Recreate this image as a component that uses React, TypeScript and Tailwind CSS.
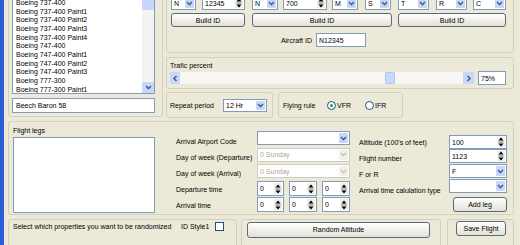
const aircraft = [
  "Boeing 737-400",
  "Boeing 737-400 Paint1",
  "Boeing 737-400 Paint2",
  "Boeing 737-400 Paint3",
  "Boeing 737-400 Paint4",
  "Boeing 747-400",
  "Boeing 747-400 Paint1",
  "Boeing 747-400 Paint2",
  "Boeing 747-400 Paint3",
  "Boeing 777-300",
  "Boeing 777-300 Paint1",
];

function Chevron({ dir = "down", color = "#4d6185" }: { dir?: string; color?: string }) {
  const pts =
    dir === "down" ? "1,2 3.5,4.5 6,2" : dir === "left" ? "4.5,1 2,3.5 4.5,6" : "2.5,1 5,3.5 2.5,6";
  return (
    <svg width="7" height="7" viewBox="0 0 7 7">
      <polyline points={pts} fill="none" stroke={color} strokeWidth="1.6" />
    </svg>
  );
}

function Combo({ className, text, disabled }: { className: string; text?: string; disabled?: boolean }) {
  return (
    <div
      className={`flex bg-white border ${disabled ? "border-[#cfccbd] text-[#aca899]" : "border-[#7f9db9]"} ${className}`}
    >
      <div className="flex-1 flex items-center pl-[2px] whitespace-nowrap overflow-hidden">{text}</div>
      <div
        className={`w-[9px] m-[1px] rounded-[1px] flex items-center justify-center ${disabled ? "bg-[#f1f0ea]" : "bg-[#c6d7fb]"}`}
      >
        <Chevron color={disabled ? "#c9c7ba" : "#4d6185"} />
      </div>
    </div>
  );
}

function Spin({ className, text }: { className: string; text: string }) {
  return (
    <div className={`flex bg-white border border-[#7f9db9] ${className}`}>
      <div className="flex-1 flex items-center pl-[2px] whitespace-nowrap overflow-hidden">{text}</div>
      <div className="w-[8px] m-[1px] bg-[#efeee8] flex items-center justify-center">
        <svg width="6" height="10" viewBox="0 0 6 10">
          <polygon points="3,0.5 5.5,3.5 0.5,3.5" fill="#000" />
          <line x1="0.5" y1="5" x2="5.5" y2="5" stroke="#555" strokeWidth="0.8" />
          <polygon points="0.5,6.5 5.5,6.5 3,9.5" fill="#000" />
        </svg>
      </div>
    </div>
  );
}

function Btn({ className, children }: { className: string; children: React.ReactNode }) {
  return (
    <div
      className={`flex items-center justify-center rounded-[3px] border border-[#5b6a7b] bg-linear-to-b from-white to-[#e3e1d5] ${className}`}
    >
      {children}
    </div>
  );
}

function Radio({ checked }: { checked?: boolean }) {
  return (
    <div className="w-[9px] h-[9px] rounded-full border border-[#1c5180] bg-white flex items-center justify-center">
      {checked && <div className="w-[3px] h-[3px] rounded-full bg-[#21a121]" />}
    </div>
  );
}

export default function App() {
  return (
    <div className="w-[520px] h-[245px] overflow-hidden bg-[#ece9d8] flex font-['Liberation_Sans',Arial,sans-serif] text-[7px] leading-none text-black">
      <div className="w-[4px] shrink-0 bg-[#2b5fd9]" />
      <div className="w-[516px] shrink-0 flex flex-col">
        {/* top section */}
        <div className="flex items-start">
          <div className="ml-[4px] -mt-[6px] w-[155px] h-[123px] shrink-0 border border-[#d0d0bf] rounded-[3px] flex flex-col">
            <div className="ml-[3px] mt-[1px] w-[143px] h-[98px] border border-[#7f9db9] bg-white flex">
              <div className="flex-1 pl-[3px] pt-[2px] leading-[8.67px] overflow-hidden whitespace-nowrap">
                {aircraft.map((a) => (
                  <div key={a}>{a}</div>
                ))}
              </div>
              <div className="w-[12px] flex flex-col bg-[#f4f3ef]">
                <div className="h-[13px] bg-[#c6d7fb] rounded-[1px]" />
                <div className="flex-1" />
                <div className="h-[11px] bg-[#c6d7fb] rounded-[1px] flex items-center justify-center">
                  <Chevron />
                </div>
              </div>
            </div>
            <div className="ml-[3px] mt-[4px] w-[143px] h-[15px] border border-[#7f9db9] bg-white flex items-center pl-[3px]">
              Beech Baron 58
            </div>
          </div>

          <div className="ml-[3px] w-[348px] shrink-0 flex flex-col">
            <div className="-mt-[8px] h-[61px] border border-[#d0d0bf] rounded-[3px] flex flex-col">
              <div className="mt-[3px] h-[14px] flex">
                <Combo className="ml-[4px] w-[25px]" text="N" />
                <Spin className="ml-[6px] w-[43px]" text="12345" />
                <Combo className="ml-[7px] w-[26px]" text="N" />
                <Spin className="ml-[5px] w-[44px]" text="700" />
                <Combo className="ml-[5px] w-[26px]" text="M" />
                <Combo className="ml-[7px] w-[26px]" text="S" />
                <Combo className="ml-[7px] w-[31px]" text="T" />
                <Combo className="ml-[7px] w-[31px]" text="R" />
                <Combo className="ml-[6px] w-[33px]" text="C" />
              </div>
              <div className="mt-[3px] h-[14px] flex">
                <Btn className="ml-[4px] w-[74px]">Build ID</Btn>
                <Btn className="ml-[7px] w-[140px]">Build ID</Btn>
                <Btn className="ml-[6px] w-[108px]">Build ID</Btn>
              </div>
              <div className="mt-[6px] h-[14px] flex items-center">
                <div className="w-[145px] text-right">Aircraft ID</div>
                <div className="ml-[4px] w-[50px] h-[14px] border border-[#7f9db9] bg-white flex items-center pl-[2px]">
                  N12345
                </div>
              </div>
            </div>

            <div className="mt-[4px] h-[32px] border border-[#d0d0bf] rounded-[3px] flex flex-col">
              <div className="mt-[2px] h-[10px] pl-[3px] flex items-center">Trafic percent</div>
              <div className="mt-[1px] h-[14px] flex items-center">
                <div className="ml-[3px] w-[304px] h-[12px] flex bg-[#f7f6f2]">
                  <div className="w-[10px] bg-[#c6d7fb] rounded-[1px] flex items-center justify-center">
                    <Chevron dir="left" />
                  </div>
                  <div className="flex-1 flex">
                    <div className="ml-[205px] w-[10px] bg-[#c9d9fb] border border-[#b2c6ee] rounded-[1px]" />
                  </div>
                  <div className="w-[11px] bg-[#c6d7fb] rounded-[1px] flex items-center justify-center">
                    <Chevron dir="right" />
                  </div>
                </div>
                <div className="ml-[4px] w-[28px] h-[14px] border border-[#7f9db9] bg-white flex items-center pl-[2px]">
                  75%
                </div>
              </div>
            </div>

            <div className="mt-[3px] flex">
              <div className="w-[107px] h-[26px] border border-[#d0d0bf] rounded-[3px] flex items-center pl-[3px]">
                <div className="w-[53px]">Repeat period</div>
                <Combo className="w-[44px] h-[13px]" text="12 Hr" />
              </div>
              <div className="ml-[5px] w-[125px] h-[26px] border border-[#d0d0bf] rounded-[3px] flex items-center pl-[4px]">
                <div className="w-[44px]">Flying rule</div>
                <Radio checked />
                <div className="ml-[1px]">VFR</div>
                <div className="ml-[14px]">
                  <Radio />
                </div>
                <div className="ml-[1px]">IFR</div>
              </div>
            </div>
          </div>
        </div>

        {/* flight legs */}
        <div className="ml-[4px] mt-[3px] w-[506px] h-[101px] border border-[#d0d0bf] rounded-[3px] flex">
          <div className="ml-[4px] w-[142px] flex flex-col">
            <div className="mt-[3px] h-[10px] flex items-center">Flight legs</div>
            <div className="mt-[2px] h-[76px] border border-[#7f9db9] bg-white" />
          </div>
          <div className="ml-[21px] w-[81px] pt-[11.5px] flex flex-col whitespace-nowrap">
            <div className="h-[16px] flex items-center">Arrival Airport Code</div>
            <div className="h-[16px] flex items-center">Day of week (Departure)</div>
            <div className="h-[16px] flex items-center">Day of week (Arrival)</div>
            <div className="h-[16px] flex items-center">Departure time</div>
            <div className="h-[16px] flex items-center">Arrival time</div>
          </div>
          <div className="w-[93px] flex flex-col">
            <Combo className="mt-[9px] h-[14px]" />
            <Combo className="mt-[2.5px] h-[14px]" text="0 Sunday" disabled />
            <Combo className="mt-[2.5px] h-[14px]" text="0 Sunday" disabled />
            <div className="mt-[3px] h-[15px] flex">
              <Spin className="w-[27px]" text="0" />
              <Spin className="ml-[5px] w-[28px]" text="0" />
              <Spin className="ml-[5px] w-[28px]" text="0" />
            </div>
            <div className="mt-[1px] h-[15px] flex">
              <Spin className="w-[27px]" text="0" />
              <Spin className="ml-[5px] w-[28px]" text="0" />
              <Spin className="ml-[5px] w-[28px]" text="0" />
            </div>
          </div>
          <div className="ml-[9px] w-[90px] pt-[12px] flex flex-col whitespace-nowrap">
            <div className="h-[16px] flex items-center">Altitude (100's of feet)</div>
            <div className="h-[16px] flex items-center">Flight number</div>
            <div className="h-[16px] flex items-center">F or R</div>
            <div className="h-[16px] flex items-center">Arrival time calulation type</div>
          </div>
          <div className="w-[58px] pt-[13px] flex flex-col">
            <Spin className="h-[14px]" text="100" />
            <Spin className="h-[14px]" text="1123" />
            <Combo className="mt-[1px] h-[14px]" text="F" />
            <Combo className="mt-[1px] h-[14px]" />
            <Btn className="mt-[4px] self-end w-[54px] h-[15px]">Add leg</Btn>
          </div>
        </div>

        {/* bottom row */}
        <div className="mt-[4px] flex">
          <div className="ml-[4px] w-[229px] h-[30px] border border-[#d0d0bf] rounded-[3px] flex items-start">
            <div className="h-[14px] pl-[4px] flex items-center whitespace-nowrap">
              <div className="w-[168px]">Select which properties you want to be randomized</div>
              <div>ID Style1</div>
              <div className="ml-[6px] w-[9px] h-[9px] border border-[#1c5180] bg-white" />
            </div>
          </div>
          <div className="ml-[4px] w-[200px] h-[30px] border border-[#d0d0bf] rounded-[3px] flex items-start">
            <Btn className="ml-[5px] mt-[2px] w-[183px] h-[16px]">Random Altitude</Btn>
          </div>
          <div className="ml-[6px] w-[67px] h-[30px] border border-[#d0d0bf] rounded-[3px] flex items-start">
            <Btn className="ml-[8px] mt-[1px] w-[50px] h-[15px]">Save Flight</Btn>
          </div>
        </div>
      </div>
    </div>
  );
}
